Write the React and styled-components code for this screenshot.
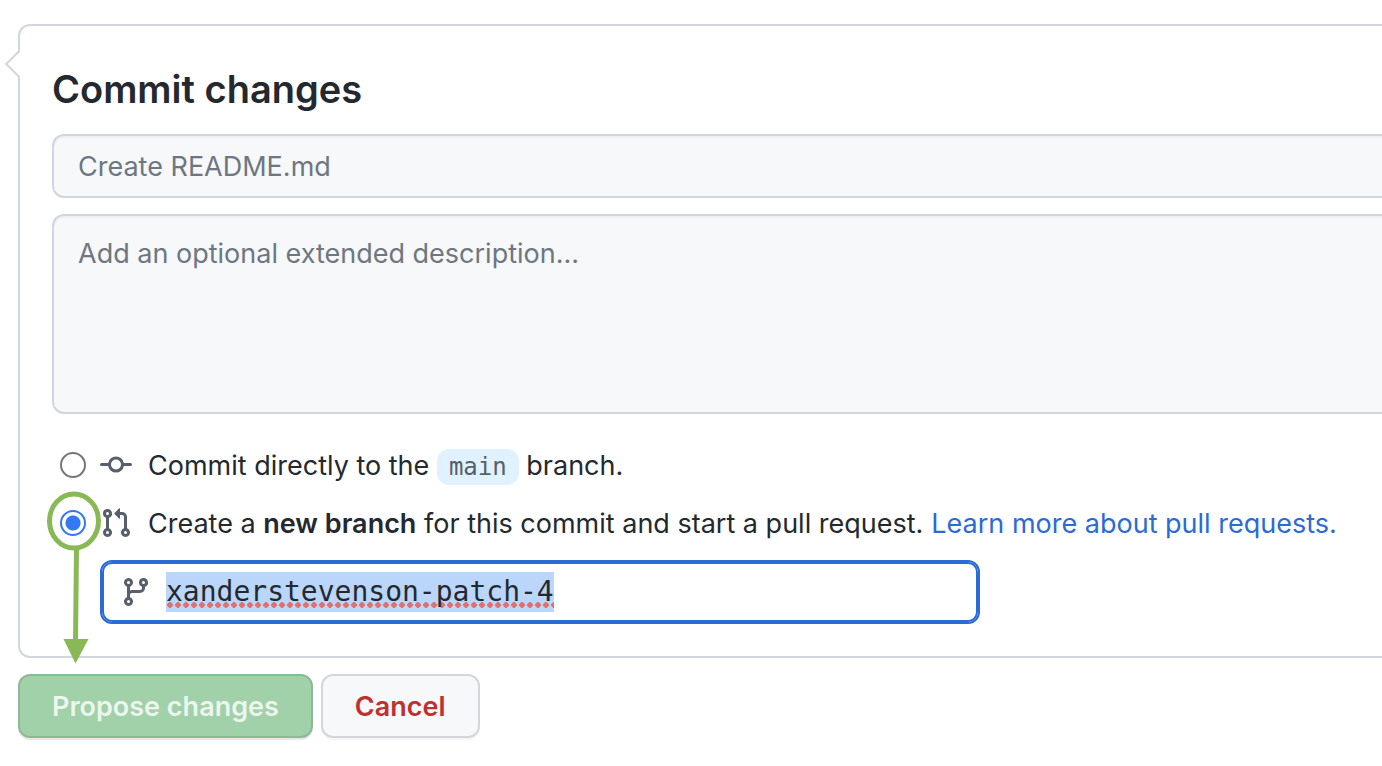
import React, { useState } from 'react';
import styled, { createGlobalStyle } from 'styled-components';

const sans = '"Inter", "Liberation Sans", sans-serif';
const mono = '"DejaVu Sans Mono", "Liberation Mono", monospace';

const GlobalStyle = createGlobalStyle`
  *, *::before, *::after { box-sizing: border-box; }
  body {
    margin: 0;
    background: #ffffff;
    color: #24292f;
    font: 400 27px/40px ${sans};
    overflow-x: hidden;
  }
`;

const Page = styled.form`
  display: flex;
  flex-direction: column;
  gap: 16px;
  padding: 24px 0 28px 18px;
`;

const Card = styled.section`
  position: relative;
  display: flex;
  flex-direction: column;
  padding: 32px 0 32px 32px;
  border: 2px solid #d0d7de;
  border-right: 0;
  border-radius: 12px 0 0 12px;

  &::before {
    content: '';
    position: absolute;
    top: 28px;
    left: -11px;
    width: 20px;
    height: 20px;
    border: solid #d0d7de;
    border-width: 0 0 2px 2px;
    background: linear-gradient(45deg, #ffffff 60%, transparent 60%);
    transform: rotate(45deg);
  }
`;

const Title = styled.h3`
  margin: 0 0 14px;
  font-size: 38px;
  font-weight: 600;
  line-height: 62px;
`;

const Field = styled.input`
  display: block;
  width: 100%;
  height: ${(p) => p.$height}px;
  margin: 0 0 ${(p) => p.$gap}px;
  padding: ${(p) => p.$padY}px 24px;
  border: 2px solid #d0d7de;
  border-right: 0;
  border-radius: 12px 0 0 12px;
  background: #f6f8fa;
  box-shadow: inset 0 2px 0 rgba(208, 215, 222, 0.2);
  color: #24292f;
  font: inherit;
  resize: none;
  outline: none;

  &::placeholder { color: #6e7781; opacity: 1; }
`;

const Choice = styled.div`
  display: flex;
  align-items: center;
  height: 58px;
  padding-left: 8px;
  white-space: nowrap;
`;

const Radio = styled.input`
  appearance: none;
  flex: none;
  width: 26px;
  height: 26px;
  margin: 0 14px 0 0;
  border: 2px solid #767676;
  border-radius: 50%;
  background: #ffffff;

  &:checked {
    border-color: #3478f6;
    background: radial-gradient(circle, #3478f6 7px, #ffffff 8px);
  }
`;

const ChoiceLabel = styled.label`
  display: flex;
  align-items: center;
  gap: 16px;
`;

const ChoiceText = styled.span`
  padding-top: 2px;
`;

const Octicon = styled.svg`
  flex: none;
  width: 32px;
  height: 32px;
  fill: #57606a;
`;

const BranchName = styled.code`
  display: inline-block;
  padding: 0 12px;
  border-radius: 12px;
  background: #e0f2ff;
  color: #57606a;
  font: 24px/36px ${mono};
`;

const Strong = styled.strong`
  font-weight: 600;
`;

const Link = styled.a`
  margin-left: 8px;
  padding-top: 2px;
  color: #2a6bd6;
  text-decoration: none;
`;

const BranchBox = styled.label`
  display: flex;
  align-items: center;
  gap: 14px;
  width: 880px;
  max-width: calc(100% - 48px);
  height: 64px;
  margin: 8px 0 0 48px;
  padding: 0 18px;
  border: 2px solid #2a6bd6;
  border-radius: 12px;
  box-shadow: inset 0 0 0 2px #2a6bd6;
`;

const BranchInput = styled.input`
  flex: 0 1 ${(p) => p.$chars}ch;
  min-width: 0;
  height: 40px;
  padding: 0;
  border: 0;
  outline: none;
  color: #24292f;
  font: 28px/40px ${mono};
  background:
    radial-gradient(circle 3px, #e2706c 85%, transparent 100%) 0 30px / 8px 6px repeat-x,
    linear-gradient(#bad6fb, #bad6fb) 0 0 / 100% 100% no-repeat;
`;

const Pointer = styled.svg`
  position: absolute;
  left: 24px;
  bottom: -8px;
  width: 60px;
  height: 176px;
  pointer-events: none;
`;

const Actions = styled.div`
  display: flex;
  gap: 8px;
`;

const Button = styled.button`
  height: 64px;
  padding: 2px 32px 0;
  border: 2px solid ${(p) => (p.$primary ? '#8fb996' : '#d3d7db')};
  border-radius: 12px;
  background: ${(p) => (p.$primary ? '#a0d1a8' : '#f6f8fa')};
  box-shadow: 0 2px 0 ${(p) => (p.$primary ? 'rgba(27, 31, 36, 0.1)' : 'rgba(27, 31, 36, 0.04)')};
  color: ${(p) => (p.$primary ? '#ecf6ee' : '#bf3030')};
  font: 600 27px/40px ${sans};
`;

const paths = {
  commit:
    'M10.5 7.75a2.5 2.5 0 11-5 0 2.5 2.5 0 015 0zm1.43.75a4.002 4.002 0 01-7.86 0H.75a.75.75 0 110-1.5h3.32a4.001 4.001 0 017.86 0h3.32a.75.75 0 110 1.5h-3.32z',
  pull:
    'M7.177 3.073L9.573.677A.25.25 0 0110 .854v4.792a.25.25 0 01-.427.177L7.177 3.427a.25.25 0 010-.354zM3.75 2.5a.75.75 0 100 1.5.75.75 0 000-1.5zm-2.25.75a2.25 2.25 0 113 2.122v5.256a2.251 2.251 0 11-1.5 0V5.372A2.25 2.25 0 011.5 3.25zM11 2.5h-1V4h1a1 1 0 011 1v5.628a2.251 2.251 0 101.5 0V5A2.5 2.5 0 0011 2.5zm1 10.25a.75.75 0 111.5 0 .75.75 0 01-1.5 0zM3.75 12a.75.75 0 100 1.5.75.75 0 000-1.5z',
  branch:
    'M11.75 2.5a.75.75 0 100 1.5.75.75 0 000-1.5zm-2.25.75a2.25 2.25 0 113 2.122V6A2.5 2.5 0 0110 8.5H6a1 1 0 00-1 1v1.128a2.251 2.251 0 11-1.5 0V5.372a2.25 2.25 0 111.5 0v1.836A2.492 2.492 0 016 7h4a1 1 0 001-1v-.628A2.25 2.25 0 019.5 3.25zM4.25 12a.75.75 0 100 1.5.75.75 0 000-1.5zM3.5 3.25a.75.75 0 111.5 0 .75.75 0 01-1.5 0z',
};

function Icon({ name }) {
  return (
    <Octicon viewBox="0 0 16 16" aria-hidden="true">
      <path fillRule="evenodd" d={paths[name]} />
    </Octicon>
  );
}

export default function App() {
  const [target, setTarget] = useState('new');
  const [branch, setBranch] = useState('xanderstevenson-patch-4');

  return (
    <>
      <GlobalStyle />
      <Page onSubmit={(e) => e.preventDefault()}>
        <Card>
          <Title>Commit changes</Title>
          <Field
            type="text"
            aria-label="Commit summary"
            placeholder="Create README.md"
            $height={64}
            $gap={16}
            $padY={8}
          />
          <Field
            as="textarea"
            aria-label="Extended description"
            placeholder="Add an optional extended description..."
            $height={200}
            $gap={22}
            $padY={18}
          />
          <Choice>
            <Radio
              type="radio"
              id="direct"
              name="target"
              checked={target === 'direct'}
              onChange={() => setTarget('direct')}
            />
            <ChoiceLabel htmlFor="direct">
              <Icon name="commit" />
              <ChoiceText>
                Commit directly to the <BranchName>main</BranchName> branch.
              </ChoiceText>
            </ChoiceLabel>
          </Choice>
          <Choice>
            <Radio
              type="radio"
              id="new"
              name="target"
              checked={target === 'new'}
              onChange={() => setTarget('new')}
            />
            <ChoiceLabel htmlFor="new">
              <Icon name="pull" />
              <ChoiceText>
                Create a <Strong>new branch</Strong> for this commit and start a pull request.
              </ChoiceText>
            </ChoiceLabel>
            <Link href="#pull-requests">Learn more about pull requests.</Link>
          </Choice>
          <BranchBox>
            <Icon name="branch" />
            <BranchInput
              type="text"
              aria-label="New branch name"
              value={branch}
              $chars={branch.length}
              onChange={(e) => setBranch(e.target.value)}
            />
          </BranchBox>
          <Pointer viewBox="0 0 60 176" aria-hidden="true">
            <ellipse cx="30" cy="33" rx="24.5" ry="27" fill="none" stroke="#89b957" strokeWidth="5" />
            <path d="M32.5 60L31.5 153" stroke="#89b957" strokeWidth="5" />
            <path d="M19.500 151H44.500L31.500 175.500Z" fill="#89b957" />
          </Pointer>
        </Card>
        <Actions>
          <Button type="submit" $primary>Propose changes</Button>
          <Button type="button">Cancel</Button>
        </Actions>
      </Page>
    </>
  );
}
